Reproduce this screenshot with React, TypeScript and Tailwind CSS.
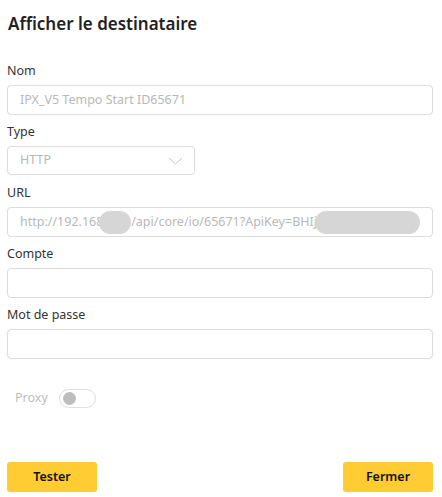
import React from "react";

const font = { fontFamily: '"Noto Sans", "Open Sans", sans-serif' };

function Label({ children }: { children: React.ReactNode }) {
  return <div className="h-[22px] text-[12.5px] leading-[16px] text-[#333]">{children}</div>;
}

function Field({ label, children }: { label: string; children: React.ReactNode }) {
  return (
    <div className="h-[61px]">
      <Label>{label}</Label>
      {children}
    </div>
  );
}

const inputCls = "h-[30px] border border-[#dcdcdc] rounded-[4px] flex items-center px-[12px] text-[12.5px] text-[#b8b8b8]";

export default function App() {
  return (
    <div className="w-[442px] h-[497px] bg-white relative" style={font}>
      <div className="px-[7px] pt-[12px] pr-[9px]">
        <h1 className="h-[24px] text-[17px] leading-[24px] font-semibold text-[#222] pl-[1px]">Afficher le destinataire</h1>
        <div className="mt-[27px]">
          <Field label="Nom">
            <div className={inputCls}>IPX_V5 Tempo Start ID65671</div>
          </Field>
          <Field label="Type">
            <div className="w-[188px] h-[29px] border border-[#dcdcdc] rounded-[4px] flex items-center justify-between pl-[12px] pr-[11px] text-[12.5px] text-[#b8b8b8]">
              <span>HTTP</span>
              <svg width="15" height="8" viewBox="0 0 15 8" fill="none">
                <path d="M1 1 L7.5 7 L14 1" stroke="#c4c4c4" strokeWidth="1" />
              </svg>
            </div>
          </Field>
          <Field label="URL">
            <div className={inputCls + " overflow-hidden whitespace-nowrap"}>
              <span>http://192.168</span>
              <span className="inline-block ml-[-4px] w-[35px] h-[23px] rounded-full bg-[#d6d6d6]" />
              <span>/api/core/io/65671?ApiKey=BHIj</span>
              <span className="inline-block ml-[-2px] w-[105px] h-[23px] rounded-full bg-[#d6d6d6] shrink-0" />
            </div>
          </Field>
          <Field label="Compte">
            <div className={inputCls} />
          </Field>
          <Field label="Mot de passe">
            <div className={inputCls} />
          </Field>
        </div>
        <div className="mt-[21px] flex items-center pl-[8px] gap-[11px]">
          <span className="text-[12.5px] text-[#bdbdbd]">Proxy</span>
          <div className="w-[37px] h-[19px] rounded-full border border-[#dedede] flex items-center pl-[3px]">
            <div className="w-[13px] h-[13px] rounded-full bg-[#bdbdbd]" />
          </div>
        </div>
      </div>
      <div className="absolute left-[7px] right-[9px] top-[462px] flex justify-between">
        <button className="w-[90px] h-[30px] rounded-[3px] bg-[#ffcc33] text-[12.5px] font-semibold text-[#111]">Tester</button>
        <button className="w-[90px] h-[30px] rounded-[3px] bg-[#ffcc33] text-[12.5px] font-semibold text-[#111]">Fermer</button>
      </div>
    </div>
  );
}
